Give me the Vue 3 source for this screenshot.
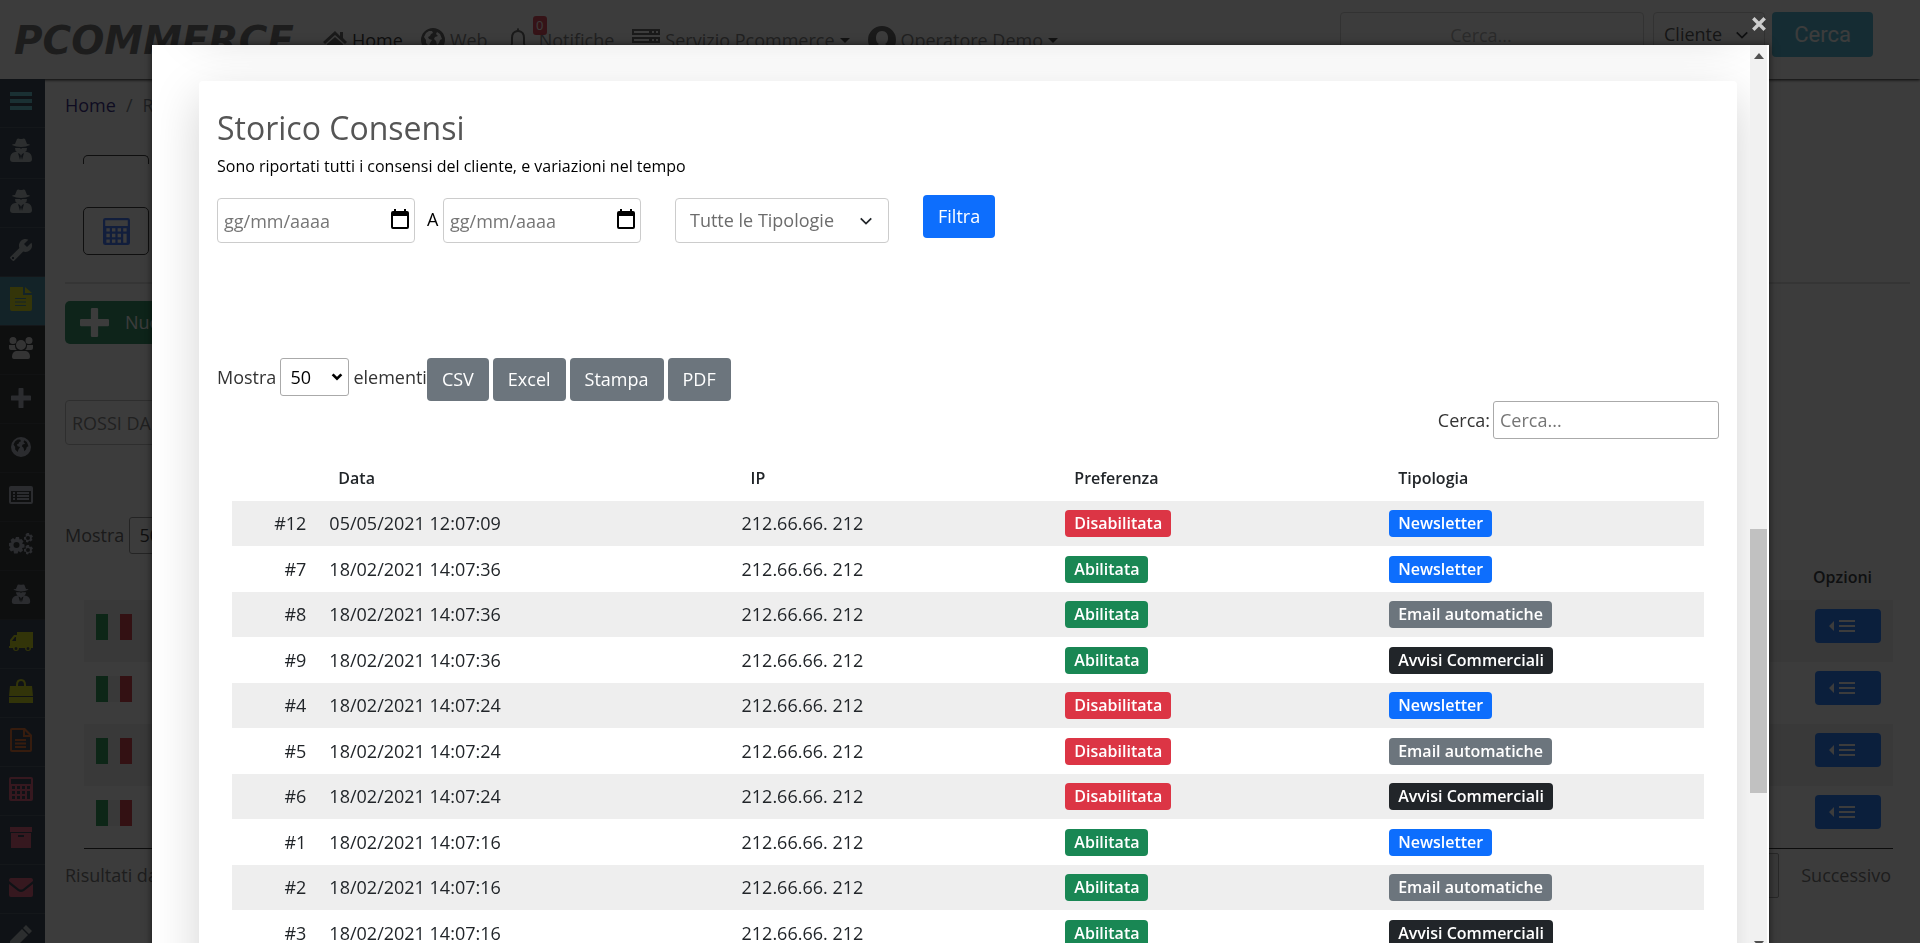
<template>
	<div class="page">
		<header class="topbar">
			<a class="logo" href="#">PCOMMERCE</a>
			<nav class="nav">
				<a class="nav_item active" href="#">
					<svg class="nav_icon" viewBox="0 0 24 24"><path :d="icons.home" /></svg>Home
				</a>
				<a class="nav_item" href="#">
					<svg class="nav_icon" viewBox="0 0 24 24"><path fill-rule="evenodd" :d="icons.globe" /></svg>Web
				</a>
				<a class="nav_item bell" href="#">
					<svg class="nav_icon" viewBox="0 0 24 24"><path fill-rule="evenodd" :d="icons.bell" /></svg>Notifiche
					<span class="bell_count">0</span>
				</a>
				<a class="nav_item" href="#">
					<svg class="nav_icon wide" viewBox="0 0 28 24"><path fill-rule="evenodd" :d="icons.server" /></svg>Servizio Pcommerce
					<span class="caret"></span>
				</a>
				<a class="nav_item" href="#">
					<svg class="nav_icon wide" viewBox="0 0 28 28"><path fill-rule="evenodd" :d="icons.user" /></svg>Operatore Demo
					<span class="caret"></span>
				</a>
			</nav>
			<form class="top_search" @submit.prevent>
				<input class="top_input" type="text" placeholder="Cerca..." aria-label="Cerca" />
				<div class="select_box top_select">
					<select aria-label="Tipo di ricerca">
						<option>Cliente</option>
					</select>
					<svg class="chevron" viewBox="0 0 16 16"><path d="M2 5l6 6 6-6" /></svg>
				</div>
				<button class="top_btn" type="submit">Cerca</button>
			</form>
		</header>

		<div class="layout">
			<aside class="sidebar">
				<a v-for="(item, i) in menu" :key="i" href="#" class="side_item" :class="[item.tone, { tall: i === 1 }]"
					:aria-label="item.label">
					<svg class="side_icon" :class="{ flip: item.icon === 'wrench', small: item.small }" viewBox="0 0 24 24">
						<path fill-rule="evenodd" :d="icons[item.icon]" />
					</svg>
				</a>
			</aside>

			<main class="content">
				<nav class="breadcrumb">
					<a href="#">Home</a><span>/</span><span>Report</span>
				</nav>
				<div class="tile cut"></div>
				<button class="tile" type="button" aria-label="Calcolatrice">
					<svg viewBox="0 0 24 24"><path fill-rule="evenodd" :d="icons.calc" /></svg>
				</button>
				<hr class="divider" />
				<button class="new_btn" type="button">
					<svg viewBox="0 0 24 24"><path :d="icons.plus" /></svg>Nuovo
				</button>
				<input class="client_input" type="text" value="ROSSI DANIELE" aria-label="Cliente" />
				<div class="page_length">
					<label for="bg-length">Mostra</label>
					<select id="bg-length">
						<option>50</option>
					</select>
				</div>
				<table class="bg_table">
					<thead>
						<tr>
							<th></th>
							<th class="options">Opzioni</th>
						</tr>
					</thead>
					<tbody>
						<tr v-for="n in 4" :key="n">
							<td><span class="flag"></span></td>
							<td class="options">
								<button type="button" aria-label="Opzioni">
									<svg viewBox="0 0 28 14"><path d="M0 7l5-5v10zM10 1h16v2H10zM10 6h16v2H10zM10 11h16v2H10z" /></svg>
								</button>
							</td>
						</tr>
					</tbody>
				</table>
				<div class="pager">
					<span>Risultati da 1 a 4</span>
					<div class="pager_links">
						<button class="page_num" type="button">1</button>
						<a href="#">Successivo</a>
					</div>
				</div>
			</main>
		</div>

		<div class="overlay">
			<button class="close" type="button" aria-label="Chiudi">
				<svg viewBox="0 0 14 14"><path d="M2 2l10 10M12 2L2 12" /></svg>
			</button>
			<div class="modal">
				<div class="modal_body">
					<section class="card previous"></section>
					<section class="card">
						<h2>Storico Consensi</h2>
						<p class="subtitle">Sono riportati tutti i consensi del cliente, e variazioni nel tempo</p>

						<form class="filters" @submit.prevent>
							<div class="date_box">
								<input id="date-from" v-model="dateFrom" type="text" placeholder="gg/mm/aaaa" aria-label="Dal" />
								<svg viewBox="0 0 18 20"><path fill-rule="evenodd" :d="icons.calendar" /></svg>
							</div>
							<label class="to_label" for="date-to">A</label>
							<div class="date_box">
								<input id="date-to" v-model="dateTo" type="text" placeholder="gg/mm/aaaa" />
								<svg viewBox="0 0 18 20"><path fill-rule="evenodd" :d="icons.calendar" /></svg>
							</div>
							<div class="select_box type_select">
								<select v-model="type" aria-label="Tipologia">
									<option value="">Tutte le Tipologie</option>
									<option v-for="(cls, name) in typeClass" :key="name" :value="name">{{ name }}</option>
								</select>
								<svg class="chevron" viewBox="0 0 16 16"><path d="M2 5l6 6 6-6" /></svg>
							</div>
							<button class="btn primary" type="submit">Filtra</button>
						</form>

						<div class="toolbar">
							<div class="length">
								<label for="length">Mostra</label>
								<div class="select_box length_select">
									<select id="length" v-model="pageLength">
										<option>10</option>
										<option>50</option>
										<option>100</option>
									</select>
									<svg class="chevron" viewBox="0 0 16 16"><path d="M3 5l5 5 5-5" /></svg>
								</div>
								<span>elementi</span>
							</div>
							<div class="exports">
								<button v-for="name in exportsList" :key="name" class="btn secondary" type="button">{{ name }}</button>
							</div>
						</div>
						<div class="search">
							<label for="search">Cerca:</label>
							<input id="search" v-model="search" type="text" placeholder="Cerca..." />
						</div>

						<table class="consents">
							<colgroup>
								<col />
								<col class="col_date" />
								<col class="col_std" />
								<col class="col_std" />
								<col class="col_std" />
							</colgroup>
							<thead>
								<tr>
									<th></th>
									<th>Data</th>
									<th>IP</th>
									<th>Preferenza</th>
									<th>Tipologia</th>
								</tr>
							</thead>
							<tbody>
								<tr v-for="row in rows" :key="row.id">
									<td class="num">#{{ row.id }}</td>
									<td>{{ row.date }}</td>
									<td>212.66.66. 212</td>
									<td>
										<span class="badge" :class="row.enabled ? 'green' : 'red'">{{ row.enabled ? 'Abilitata' : 'Disabilitata' }}</span>
									</td>
									<td><span class="badge" :class="typeClass[row.type]">{{ row.type }}</span></td>
								</tr>
							</tbody>
						</table>
					</section>
				</div>
				<div class="scrollbar">
					<span class="arrow up"></span>
					<span class="thumb"></span>
					<span class="arrow down"></span>
				</div>
			</div>
		</div>
	</div>
</template>

<script setup>
	import {
		ref,
		computed
	} from 'vue'

	const dateFrom = ref('')
	const dateTo = ref('')
	const type = ref('')
	const pageLength = ref('50')
	const search = ref('')

	const exportsList = ['CSV', 'Excel', 'Stampa', 'PDF']

	const typeClass = {
		'Newsletter': 'blue',
		'Email automatiche': 'grey',
		'Avvisi Commerciali': 'dark',
	}

	const consents = [
		{ id: 12, date: '05/05/2021 12:07:09', enabled: false, type: 'Newsletter' },
		{ id: 7, date: '18/02/2021 14:07:36', enabled: true, type: 'Newsletter' },
		{ id: 8, date: '18/02/2021 14:07:36', enabled: true, type: 'Email automatiche' },
		{ id: 9, date: '18/02/2021 14:07:36', enabled: true, type: 'Avvisi Commerciali' },
		{ id: 4, date: '18/02/2021 14:07:24', enabled: false, type: 'Newsletter' },
		{ id: 5, date: '18/02/2021 14:07:24', enabled: false, type: 'Email automatiche' },
		{ id: 6, date: '18/02/2021 14:07:24', enabled: false, type: 'Avvisi Commerciali' },
		{ id: 1, date: '18/02/2021 14:07:16', enabled: true, type: 'Newsletter' },
		{ id: 2, date: '18/02/2021 14:07:16', enabled: true, type: 'Email automatiche' },
		{ id: 3, date: '18/02/2021 14:07:16', enabled: true, type: 'Avvisi Commerciali' },
	]

	// ricerca libera su data e tipologia
	const rows = computed(() => {
		const text = search.value.toLowerCase()
		return consents.filter((item) => {
			return (item.date + ' ' + item.type).toLowerCase().includes(text)
		})
	})

	const menu = [
		{ icon: 'bars', label: 'Menu', tone: 'teal' },
		{ icon: 'spy', label: 'Clienti', tone: 'slate' },
		{ icon: 'spy', label: 'Agenti', tone: 'slate' },
		{ icon: 'wrench', label: 'Strumenti', tone: 'slate' },
		{ icon: 'file', label: 'Report', tone: 'selected' },
		{ icon: 'users', label: 'Utenti', tone: 'black' },
		{ icon: 'plus', label: 'Nuovo', tone: 'black muted', small: true },
		{ icon: 'globe', label: 'Web', tone: 'black muted', small: true },
		{ icon: 'list', label: 'Elenco', tone: 'black muted' },
		{ icon: 'cogs', label: 'Impostazioni', tone: 'black muted' },
		{ icon: 'spy', label: 'Operatori', tone: 'black muted', small: true },
		{ icon: 'truck', label: 'Spedizioni', tone: 'yellow' },
		{ icon: 'bag', label: 'Ordini', tone: 'yellow' },
		{ icon: 'fileLine', label: 'Fatture', tone: 'orange' },
		{ icon: 'calc', label: 'Contabilità', tone: 'pink' },
		{ icon: 'archive', label: 'Archivio', tone: 'pink' },
		{ icon: 'mail', label: 'Messaggi', tone: 'pink' },
		{ icon: 'pencil', label: 'Modifica', tone: 'slate' },
	]

	const icons = {
		bars: 'M1 3h22v4H1zM1 10h22v4H1zM1 17h22v4H1z',
		home: 'M12 3L0 14l2 2L12 7l10 9 2-2-4-4V4h-3v4zM12 9l-8 7v7h6v-6h4v6h6v-7z',
		globe: 'M12 0a12 12 0 1 0 0 24 12 12 0 0 0 0-24zM8 3l3 0 1 2-2 1-1 2-2 1 1 2 3 1-2 3-1 3-3-3 0-3-2-3 2-4zM16 4l3 2 2 5-2 1-1 3-2 2-1-4-2-2 1-2 3-1-2-2z',
		bell: 'M12 0q-1 0-1 2Q5 3 5 10v6l-3 5h20l-3-5v-6q0-7-6-8 0-2-1-2zM12 4q5 0 5 6v6l2 3H5l2-3v-6q0-6 5-6z',
		server: 'M0 1h28v6H0zM2 3v2h15V3zM0 9h28v6H0zM2 11v2h15v-2zM0 17h28v6H0zM2 19v2h15v-2zM20 3h2v2h-2zM24 3h2v2h-2zM20 11h2v2h-2zM24 11h2v2h-2z',
		user: 'M14 0a14 14 0 1 0 0 28 14 14 0 0 0 0-28zM14 5c4 0 6 3 6 7 0 3-1 5-3 6l6 4q-3 4-9 4t-9-4l6-4c-2-1-3-3-3-6 0-4 2-7 6-7z',
		spy: 'M8 1q1-1 3 0h2q2-1 3 0l2 5q3 0 3 1-4 2-9 2T3 7q0-1 3-1zM6 10h5l1 1 1-1h5q0 3-2 4l2 0Q23 15 23 21q0 3-3 3H4q-3 0-3-3 0-6 5-7l2 0q-2-1-2-4zM9 15l2 7 1-4-1-2zM15 15l-2 7-1-4 1-2z',
		wrench: 'M22.7 19l-9.1-9.1c.9-2.3.4-5-1.5-6.9-2-2-5-2.4-7.4-1.3L9 6 6 9 1.6 4.7C.4 7.1.9 10.1 2.9 12.1c1.9 1.9 4.6 2.4 6.9 1.5l9.1 9.1c.4.4 1 .4 1.4 0l2.3-2.3c.5-.4.5-1.1.1-1.4zM19 19h2v2h-2z',
		file: 'M1 0h13v8h9v14q0 2-2 2H3q-2 0-2-2zM16 0l7 6h-7zM6 11v1h11v-1zM6 14.500v1h11v-1zM6 18v1h11v-1z',
		fileLine: 'M3 0h13l7 7v15q0 2-2 2H3q-2 0-2-2V2q0-2 2-2zM3 2v20h18V9h-7V2zM16 3v4h4zM6 11h11v2H6zM6 14.500h11v2H6zM6 18h11v2H6z',
		users: 'M12 4a5 5 0 1 0 0 10 5 5 0 0 0 0-10zM4 1a3.500 3.500 0 1 0 0 7 3.500 3.500 0 0 0 0-7zM20 1a3.500 3.500 0 1 0 0 7 3.500 3.500 0 0 0 0-7zM0 9h6q0 4 2 5H2q-2 0-2-2zM24 9h-6q0 4-2 5h6q2 0 2-2zM7 15h10q4 1 4 6 0 2-2 2H5q-2 0-2-2 0-5 4-6z',
		plus: 'M9 1q0-1 1-1h4q1 0 1 1v8h8q1 0 1 1v4q0 1-1 1h-8v8q0 1-1 1h-4q-1 0-1-1v-8H1q-1 0-1-1v-4q0-1 1-1h8z',
		list: 'M2 3h20q2 0 2 2v14q0 2-2 2H2q-2 0-2-2V5q0-2 2-2zM2 8v11h20V8zM4 9h2v2H4zM8 9h12v2H8zM4 12h2v2H4zM8 12h12v2H8zM4 15h2v2H4zM8 15h12v2H8z',
		cogs: 'M7 5h3l.5 2.500 2-.5 2 2.500-1.500 2 2.500 1v3l-2.500.5 1 2.500-2.500 2-2-1.500-1 2.500H5l-.5-3-2.500 1-2-2.500 1.500-2L0 14v-3l2.500-.5-1-2.500L4 6l2 1.500zM7.500 10a3 3 0 1 0 0 6 3 3 0 0 0 0-6zM18 1h2l.5 2 2-.5 1.500 2-1.500 1.500 1 2-2 1.500-1.500-1-1 2-2-.5v-2l-2-.5V5l2-.5-.5-2zM19 4a1.500 1.500 0 1 0 0 4 1.500 1.500 0 0 0 0-4zM18 13h2l.5 2 2-.5 1.500 2-1.500 1.500 1 2-2 1.500-1.500-1-1 2-2-.5v-2l-2-.5V17l2-.5-.5-2zM19 16a1.500 1.500 0 1 0 0 4 1.500 1.500 0 0 0 0-4z',
		truck: 'M8 2h16v16h-2a3 3 0 1 1-6 0h-6a3 3 0 1 1-6 0H0v-2h1v-6l4-5h3zM3 11h4V7H6zM7 17a1.500 1.500 0 1 0 0 3 1.500 1.500 0 0 0 0-3zM19 17a1.500 1.500 0 1 0 0 3 1.500 1.500 0 0 0 0-3z',
		bag: 'M1 7h6V6q0-6 5-6t5 6v1h6l1 10H0zM9 7h6V6q0-4-3-4T9 6zM0 18h24v6H0z',
		calc: 'M2 0h20q2 0 2 2v20q0 2-2 2H2q-2 0-2-2V2q0-2 2-2zM2 2v5h20V2zM3 9v3h3V9zM8 9v3h3V9zM13 9v3h3V9zM18 9v3h3V9zM3 14v3h3v-3zM8 14v3h3v-3zM13 14v3h3v-3zM18 14v8h3v-8zM3 19v3h3v-3zM8 19v3h3v-3zM13 19v3h3v-3z',
		archive: 'M1 1h22v5H1zM2 7h20v15H2zM9 9v2h6V9z',
		mail: 'M2 3h20q2 0 2 3l-10 8q-2 1-4 0L0 6q0-3 2-3zM0 9l9 7q3 2 6 0l9-7v11q0 2-2 2H2q-2 0-2-2z',
		pencil: 'M17 1l6 6-3 3-6-6zM13 5l6 6L7 23H1v-6z',
		calendar: 'M3 0h2v2h8V0h2v2h1q2 0 2 2v14q0 2-2 2H2q-2 0-2-2V4q0-2 2-2h1zM2 7v11h14V7z',
	}
</script>

<style>
	html,
	body {
		margin: 0;
		background: #fff;
		overflow: hidden;
	}
</style>

<style scoped>
	.page,
	.page button,
	.page input,
	.page select {
		font-family: "Open Sans", "Noto Sans", sans-serif;
		font-size: 18px;
		line-height: 27px;
	}

	.page * {
		box-sizing: border-box;
	}

	.page {
		height: 100vh;
		overflow: hidden;
		color: #212529;
		background: #fff;
	}

	.page a {
		color: inherit;
		text-decoration: none;
	}

	button,
	input,
	select {
		margin: 0;
		color: inherit;
	}

	input::placeholder {
		color: #757575;
		opacity: 1;
	}

	svg {
		display: block;
		fill: currentColor;
	}

	/* barra superiore */
	.topbar {
		position: relative;
		display: flex;
		align-items: flex-start;
		height: 79px;
		padding: 12px 47px 0 14px;
		box-shadow: 0 1px 3px #000;
	}

	.logo {
		width: 309px;
		padding-top: 7px;
		font-family: "DejaVu Sans", sans-serif;
		font-size: 39px;
		line-height: 44px;
		font-weight: 700;
		font-style: italic;
	}

	.page .logo {
		color: #666;
	}

	.nav {
		display: flex;
		flex: 1;
		gap: 18px;
		padding-top: 14px;
		color: #777;
	}

	.nav_item {
		position: relative;
		display: flex;
		align-items: center;
		gap: 5px;
		white-space: nowrap;
	}

	.page .nav_item.active {
		color: #222;
	}

	.nav_item.bell {
		gap: 9px;
	}

	.nav_icon {
		width: 24px;
		height: 24px;
		color: #555;
	}

	.nav_icon.wide {
		width: 28px;
		height: 28px;
	}

	.bell_count {
		position: absolute;
		left: 27px;
		top: -10px;
		width: 14px;
		border-radius: 3px;
		background: #dc3545;
		color: #fff;
		font-size: 13px;
		line-height: 19px;
		text-align: center;
	}

	.caret {
		border: 5px solid transparent;
		border-top-color: #333;
		border-bottom: 0;
	}

	.top_search {
		display: flex;
		align-items: flex-start;
	}

	.top_input {
		width: 304px;
		height: 45px;
		margin-right: 9px;
		padding: 0 24px 0 2px;
		border: 1px solid #ccc;
		border-radius: 4px;
		text-align: center;
	}

	.top_input::placeholder {
		color: #aaa;
	}

	.select_box {
		position: relative;
	}

	.select_box select {
		width: 100%;
		height: 100%;
		appearance: none;
		border: 1px solid #ccc;
		border-radius: 4px;
		background: #fff;
	}

	.chevron {
		position: absolute;
		right: 16px;
		top: 50%;
		width: 14px;
		height: 14px;
		margin-top: -7px;
		fill: none;
		stroke: #212529;
		stroke-width: 2;
		pointer-events: none;
	}

	.top_select {
		width: 112px;
		height: 45px;
		margin-right: 7px;
		color: #444;
	}

	.top_select select {
		padding: 0 10px;
	}

	.page .top_btn {
		width: 101px;
		height: 45px;
		border: 0;
		border-radius: 4px;
		background: #3fb0d0;
		color: #fff;
		font-family: Roboto, sans-serif;
		font-size: 22px;
	}

	/* menu laterale */
	.layout {
		display: flex;
	}

	.sidebar {
		position: relative;
		width: 45px;
		flex: none;
		background: #223040;
	}

	.side_item {
		display: flex;
		justify-content: center;
		height: 49px;
		padding: 10px 4px 0 0;
		border-bottom: 1px solid #3b4856;
	}

	.side_item.tall {
		height: 51px;
	}

	.side_icon {
		width: 24px;
		height: 24px;
	}

	.side_icon.small {
		width: 20px;
		height: 20px;
		margin-top: 3px;
	}

	.flip {
		transform: scaleX(-1);
	}

	.page .teal {
		color: #54c4d0;
	}

	.page .slate {
		color: #b0babe;
	}

	.page .selected {
		background: #34809c;
		color: #d8dc00;
	}

	.page .black {
		background: #1a1e22;
		border-color: #2a2e34;
		color: #d8d8d8;
	}

	.page .muted {
		color: #a9b0bd;
	}

	.page .yellow {
		color: #ccd400;
	}

	.page .orange {
		color: #e0601a;
	}

	.page .pink {
		color: #e04c70;
	}

	/* pagina sotto il popup */
	.content {
		flex: 1;
		padding: 13px 10px 0 20px;
	}

	.breadcrumb {
		display: flex;
		gap: 10px;
		height: 63px;
		color: #6c757d;
	}

	.page .breadcrumb a {
		color: #20107a;
	}

	.tile {
		display: flex;
		align-items: center;
		justify-content: center;
		width: 66px;
		height: 48px;
		margin: 0 0 27px 18px;
		border: 1px solid #222;
		border-radius: 5px;
		background: #fff;
		color: #2f6bff;
	}

	.tile.cut {
		height: 9px;
		margin-bottom: 43px;
		border-bottom: 0;
		border-radius: 5px 5px 0 0;
	}

	.tile svg {
		width: 27px;
		height: 27px;
	}

	.divider {
		height: 2px;
		margin: 0 0 17px;
		border: 0;
		background: #ddd;
	}

	.page .new_btn {
		display: flex;
		align-items: center;
		gap: 16px;
		height: 43px;
		padding: 0 15px;
		border: 0;
		border-radius: 5px;
		background: #198754;
		color: #fff;
	}

	.new_btn svg {
		width: 29px;
		height: 29px;
	}

	.client_input {
		display: block;
		width: 300px;
		height: 45px;
		margin-top: 56px;
		padding: 0 6px;
		border: 1px solid #bbb;
		border-radius: 4px;
		color: #777;
	}

	.page_length {
		display: flex;
		align-items: center;
		gap: 5px;
		margin-top: 72px;
		color: #555;
	}

	.page_length select {
		width: 69px;
		height: 37px;
		appearance: none;
		padding: 0 9px;
		border: 1px solid #888;
		border-radius: 3px;
		background: #fff;
		color: #222;
	}

	.bg_table {
		width: calc(100% - 36px);
		margin: 0 0 0 19px;
		border-spacing: 0;
		border-bottom: 1px solid #111;
	}

	.bg_table th {
		height: 46px;
		padding: 0;
		font-size: 16px;
		font-weight: 600;
		text-align: left;
	}

	.bg_table td {
		height: 62px;
		padding: 0 12px;
	}

	.bg_table tbody tr:nth-child(odd) {
		background: #eee;
	}

	.bg_table .options {
		width: 80px;
		padding: 0;
	}

	.options button {
		display: flex;
		align-items: center;
		width: 66px;
		height: 34px;
		margin-left: 2px;
		margin-bottom: 10px;
		padding: 0 14px;
		border: 0;
		border-radius: 4px;
		background: #0d6efd;
		color: #fff;
	}

	.options svg {
		width: 28px;
		height: 14px;
	}

	.flag {
		display: block;
		width: 36px;
		height: 26px;
		margin-bottom: 8px;
		background: linear-gradient(90deg, #178f45 33%, #eee 33% 66%, #d02a35 66%);
	}

	.pager,
	.pager_links {
		display: flex;
		align-items: center;
		justify-content: space-between;
		color: #666;
	}

	.pager {
		padding: 4px 19px 0 0;
	}

	.pager_links {
		gap: 22px;
	}

	.page_num {
		width: 42px;
		height: 45px;
		border: 1px solid #999;
		border-radius: 2px;
		background: #eee;
	}

	/* popup */
	.overlay {
		position: fixed;
		inset: 0;
		padding: 45px 151px 0 152px;
		overflow: hidden;
		background: rgba(11, 11, 11, .8);
	}

	.close {
		position: absolute;
		top: 16px;
		right: 153px;
		padding: 0;
		border: 0;
		background: none;
		color: #ccc;
	}

	.close svg {
		width: 16px;
		height: 16px;
		stroke: currentColor;
		stroke-width: 3;
	}

	.modal {
		display: flex;
		height: calc(100vh - 33px);
		padding-right: 2px;
		background: #fff;
		box-shadow: 0 0 8px rgba(0, 0, 0, .6);
	}

	.modal_body {
		flex: 1;
		overflow: hidden;
		padding: 0 13px 0 47px;
	}

	.card {
		height: 1100px;
		padding: 28px 18px 0;
		border-radius: 4px;
		background: #fff;
		box-shadow: 0 16px 48px rgba(0, 0, 0, .175);
	}

	.card.previous {
		height: 200px;
		margin: -228px 0 64px;
	}

	h2 {
		margin: 0;
		color: #555;
		font-size: 32px;
		line-height: 38px;
		font-weight: 400;
	}

	.subtitle {
		margin: 7px 0 17px;
		color: #000;
		font-size: 16px;
		line-height: 24px;
	}

	.filters {
		display: flex;
		align-items: flex-start;
		height: 48px;
	}

	.date_box,
	.type_select {
		position: relative;
		height: 45px;
		margin-top: 3px;
	}

	.date_box {
		width: 198px;
	}

	.date_box input {
		width: 100%;
		height: 100%;
		padding: 0 6px;
		border: 1px solid #ccc;
		border-radius: 4px;
	}

	.date_box svg {
		position: absolute;
		right: 6px;
		top: 11px;
		width: 18px;
		height: 20px;
		color: #000;
	}

	.to_label {
		width: 28px;
		padding: 11px 0 0 12px;
		color: #000;
	}

	.type_select {
		width: 214px;
		margin-left: 34px;
	}

	.type_select select {
		padding: 0 14px;
		color: #6c6c6c;
	}

	.btn {
		height: 43px;
		padding: 0 15px;
		border: 0;
		border-radius: 4px;
		color: #fff;
	}

	.primary {
		margin-left: 34px;
		background: #0d6efd;
	}

	.secondary {
		background: #6c757d;
	}

	.toolbar {
		display: flex;
		align-items: flex-start;
		margin-top: 115px;
	}

	.length {
		display: flex;
		align-items: center;
		gap: 4px;
		color: #333;
	}

	.length_select {
		width: 69px;
		height: 38px;
	}

	.length_select select {
		padding: 0 9px;
		border-color: #aaa;
		border-radius: 3px;
		color: #000;
	}

	.length_select .chevron {
		right: 5px;
		stroke: #000;
		stroke-width: 3;
	}

	.exports {
		display: flex;
		gap: 4px;
	}

	.search {
		display: flex;
		align-items: center;
		justify-content: flex-end;
		gap: 3px;
		color: #333;
	}

	.search input {
		width: 226px;
		height: 38px;
		padding: 0 6px;
		border: 1px solid #aaa;
		border-radius: 3px;
	}

	.consents {
		width: calc(100% - 30px);
		margin: 16px 15px 0;
		table-layout: fixed;
		border-collapse: collapse;
	}

	.col_date {
		width: 28%;
	}

	.col_std {
		width: 22%;
	}

	.consents th {
		height: 46px;
		padding: 0 18px;
		font-size: 16px;
		font-weight: 600;
		text-align: left;
	}

	.consents td {
		height: 45px;
		padding: 0 9px;
	}

	.consents .num {
		padding-right: 14px;
		text-align: right;
	}

	.consents tbody tr:nth-child(odd) {
		background: #eee;
	}

	.consents tbody tr:nth-child(even) td {
		height: 46px;
	}

	.badge {
		display: block;
		width: fit-content;
		padding: 0 9px;
		border-radius: 4px;
		color: #fff;
		font-size: 16px;
		font-weight: 600;
	}

	.blue {
		background: #0d6efd;
	}

	.grey {
		background: #6c757d;
	}

	.dark {
		background: #212529;
	}

	.green {
		background: #198754;
	}

	.red {
		background: #dc3545;
	}

	.scrollbar {
		display: flex;
		flex-direction: column;
		align-items: center;
		width: 17px;
		padding: 8px 0;
		background: #f1f1f1;
	}

	.arrow {
		border: 5px solid transparent;
	}

	.up {
		border-top: 0;
		border-bottom: 6px solid #505050;
	}

	.down {
		margin-top: auto;
		border-bottom: 0;
		border-top: 6px solid #505050;
	}

	.thumb {
		width: 17px;
		height: 264px;
		margin-top: 470px;
		background: #c1c1c1;
	}
</style>
